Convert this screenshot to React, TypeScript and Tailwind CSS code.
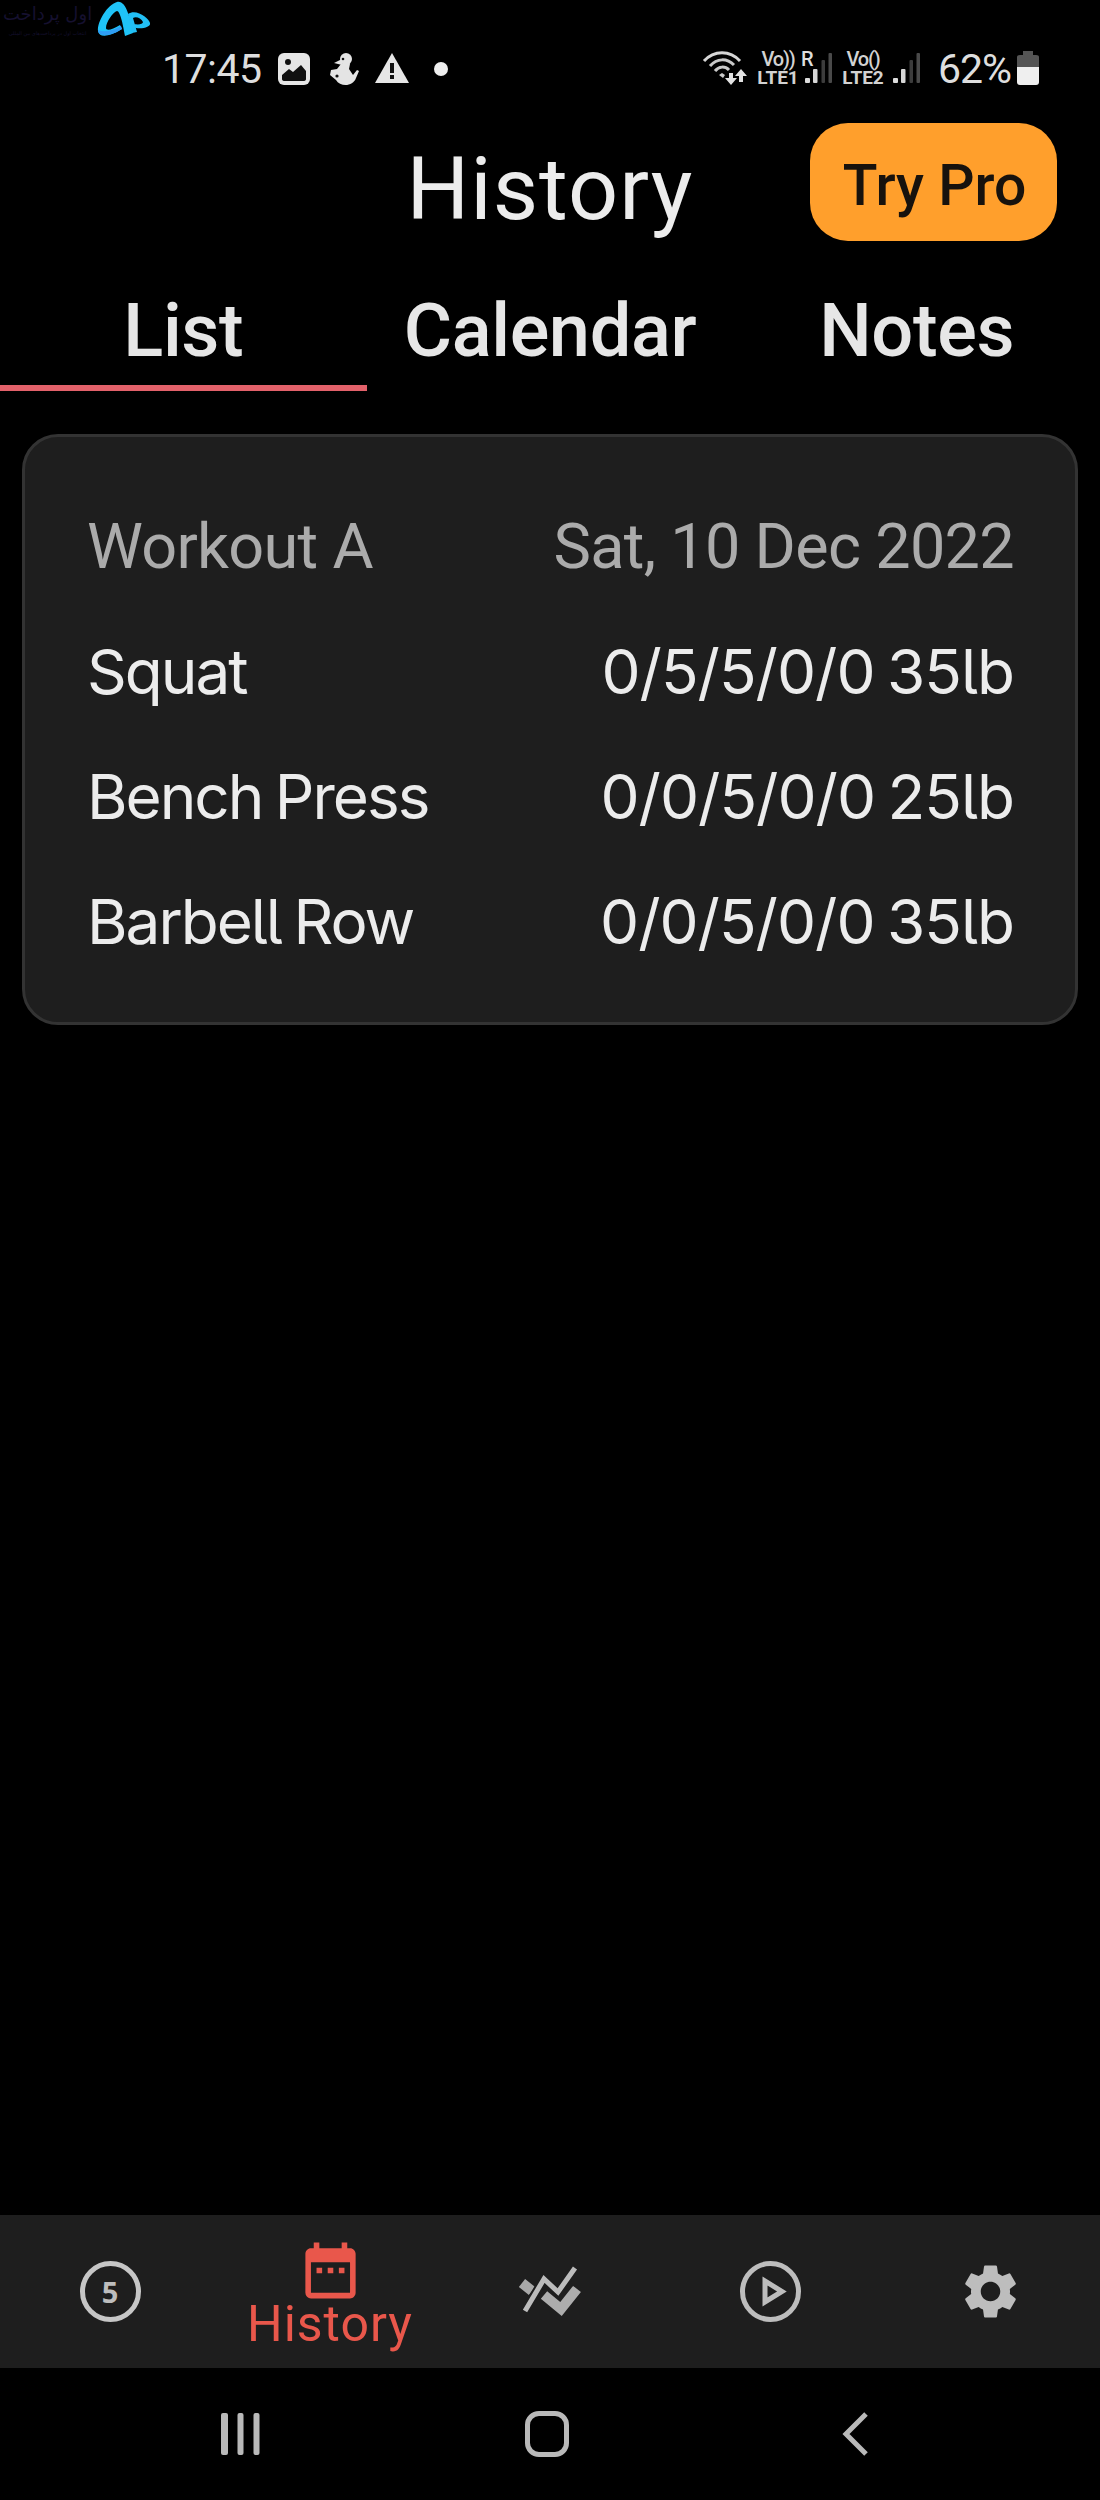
import type { ReactNode } from "react";
import { MdDateRange, MdSettings } from "react-icons/md";

const tabs = [
  { name: "List", active: true },
  { name: "Calendar", active: false },
  { name: "Notes", active: false },
];

const exercises = [
  { name: "Squat", sets: "0/5/5/0/0 35lb" },
  { name: "Bench Press", sets: "0/0/5/0/0 25lb" },
  { name: "Barbell Row", sets: "0/0/5/0/0 35lb" },
];

function BrandLogo() {
  return (
    <div className="absolute top-0 left-0 flex h-10 w-[152px] items-start">
      <div
        dir="rtl"
        className="flex h-10 w-[95px] flex-col items-center font-['DejaVu_Sans',sans-serif] text-[#15102f]"
      >
        <span className="h-[28px] text-[18px] leading-[28px] whitespace-nowrap">
          اول پرداخت
        </span>
        <span className="text-[5px] leading-[10px] whitespace-nowrap">
          انتخاب اول در پرداخت‌های بین المللی
        </span>
      </div>
      <svg viewBox="0 0 54 38" className="ml-[2px] h-[38px] w-[54px]">
        <path
          d="M20 2 C10 5 0 22 1 31 C2 38 12 37 25 29 L23 25 C15 30 9 31 9 28 C9 22 16 12 20 11 C23 11 26 24 28 36 L36 33 C33 18 29 0 20 2Z"
          fill="#1fc3f7"
        />
        <path d="M1 30c0 8 14 6 24-1l-1-3C17 30 8 33 1 30Z" fill="#2f9df4" />
        <path
          d="M31 14 C39 8 52 18 53 23 C54 27 46 29 39 28 L37 24 C42 25 46 24 46 22 C44 18 39 16 36 18 L40 32 L35 33Z"
          fill="#22bff5"
        />
      </svg>
    </div>
  );
}

function WifiIcon() {
  return (
    <svg viewBox="0 0 46 36" className="h-9 w-[46px]" fill="none">
      <path d="M2 11C12 0 28 0 38 11" stroke="#d6d6d6" strokeWidth="3" />
      <path d="M8 16C15 8 25 8 32 15" stroke="#c9c9c9" strokeWidth="3" />
      <path d="M13 21C17 16 23 16 27 20" stroke="#c9c9c9" strokeWidth="3" />
      <path d="M17 25l3-2 3 2-2 3z" fill="#c9c9c9" />
      <path d="M27 23h4v5h4l-6 7-6-7h4zM37 32v-6h-4l6-7 6 7h-4v6z" fill="#e2e2e2" />
    </svg>
  );
}

function SignalBars({ roaming = false }: { roaming?: boolean }) {
  return (
    <div className="flex h-9 flex-col">
      <span className="-mb-[15px] -ml-[2px] h-[17px] text-[20px] leading-[18px] font-medium">
        {roaming ? "R" : ""}
      </span>
      <svg viewBox="0 0 30 32" className="h-8 w-[30px]">
        <rect x="2" y="26" width="5" height="5" rx="1" fill="#ddd" />
        <rect x="10" y="17" width="4.5" height="14" rx="1" fill="#d6d6d6" />
        <rect x="18.5" y="8" width="3.5" height="23" rx="1" fill="#3c3c3c" />
        <rect x="25.5" y="1" width="3.5" height="30" rx="1" fill="#4a4a4a" />
      </svg>
    </div>
  );
}

function VolteBadge({ sim }: { sim: number }) {
  return (
    <div className="flex h-9 w-[44px] flex-col items-center text-[#d2d2d2]">
      <span className="h-[19px] text-[20px] leading-[19px] font-medium tracking-[-1.2px] whitespace-nowrap">
        {sim === 1 ? "Vo))" : "Vo()"}
      </span>
      <span className="h-[17px] text-[19px] leading-[18px] font-bold whitespace-nowrap">
        LTE{sim}
      </span>
    </div>
  );
}

function StatusBar() {
  return (
    <div className="flex h-[112px] items-start pt-[50px] pr-[61px] pl-[162px] text-[#dedede]">
      <span className="w-[116px] text-[41px] leading-[38px] tracking-[-0.5px]">
        17:45
      </span>
      <svg viewBox="0 0 32 36" className="h-9 w-8">
        <rect y="3" width="32" height="32" rx="6" fill="#e6e6e6" />
        <circle cx="10" cy="12" r="3" fill="#111" />
        <path d="M4 29V25L11 19L15 22L23 15L28 21V29Q28 31 25 31H7Q4 31 4 29Z" fill="#111" />
      </svg>
      <svg viewBox="0 0 30 36" className="ml-[19px] h-9 w-[30px]" fill="#e4e4e4">
        <circle cx="17" cy="9" r="6" />
        <path d="M5 13l8-4v6zM12 14h9l-1 5 4 6 4-5 2 1-3 7c-3 9-16 9-20 2l-6-5 1-5 6-1z" />
        <circle cx="14" cy="9" r="1.3" fill="#111" />
        <circle cx="8" cy="26" r="1.6" fill="#111" />
      </svg>
      <svg viewBox="0 0 36 36" className="ml-[15px] h-9 w-9">
        <path d="M18 3L35 33H1Z" fill="#e6e6e6" />
        <path d="M16 13h4v10h-4zM16 25h4v4h-4z" fill="#111" />
      </svg>
      <span className="mt-3 ml-[24px] size-[14px] rounded-full bg-[#eee]" />

      <div className="ml-auto flex items-start">
        <WifiIcon />
        <div className="ml-[8px]">
          <VolteBadge sim={1} />
        </div>
        <div className="ml-[3px]">
          <SignalBars roaming />
        </div>
        <div className="ml-[8px]">
          <VolteBadge sim={2} />
        </div>
        <div className="ml-[6px]">
          <SignalBars />
        </div>
        <span className="ml-[17px] w-[79px] text-[41px] leading-[38px] tracking-[-1px]">
          62%
        </span>
        <svg viewBox="0 0 22 36" className="h-9 w-[22px]">
          <path d="M0 17V7Q0 5 3 5H6V1H16V5H19Q22 5 22 7V17Z" fill="#555" />
          <path d="M0 17H22V32Q22 35 19 35H3Q0 35 0 32Z" fill="#efefef" />
        </svg>
      </div>
    </div>
  );
}

function Header() {
  return (
    <header className="grid h-[148px] grid-cols-[367px_366px_1fr]">
      <span />
      <h1 className="pt-[25px] text-center text-[88px] leading-[104px] tracking-[1px] text-[#ececec]">
        History
      </h1>
      <div className="flex justify-end pt-[11px] pr-[43px]">
        <button className="flex h-[118px] w-[247px] items-center justify-center rounded-[38px] bg-[#ff9f2c] pt-[7px] pl-[2px] text-[57px] font-medium text-[#17120d]">
          Try Pro
        </button>
      </div>
    </header>
  );
}

function Tabs() {
  return (
    <nav className="grid h-[131px] grid-cols-3 text-center text-[74px] leading-[88px] font-medium tracking-[-0.4px] text-[#e6e6e6]">
      {tabs.map((tab) => (
        <div
          key={tab.name}
          className={
            tab.active
              ? "h-[131px] border-b-[6px] border-[#e2616a] pt-[27px]"
              : "h-[131px] pt-[27px]"
          }
        >
          {tab.name}
        </div>
      ))}
    </nav>
  );
}

function WorkoutCard() {
  return (
    <section className="mx-[22px] mt-[43px] flex h-[591px] flex-col rounded-[36px] border-[3px] border-[#333] bg-[#1e1e1e] pt-[47px] pr-[61px] pl-[62px] text-[62px] leading-[125px] text-[#ececec]">
      <div className="flex justify-between text-[63px] tracking-[-0.7px] text-[#ababab]">
        <span>Workout A</span>
        <span>Sat, 10 Dec 2022</span>
      </div>
      {exercises.map((exercise) => (
        <div
          key={exercise.name}
          className="flex justify-between font-[Inter,sans-serif] [font-feature-settings:'cv05']"
        >
          <span className="tracking-[-2px] [word-spacing:-3px]">
            {exercise.name}
          </span>
          <span className="tracking-[-1px] [word-spacing:-4px]">
            {exercise.sets}
          </span>
        </div>
      ))}
    </section>
  );
}

function NavItem({ children }: { children: ReactNode }) {
  return (
    <div className="flex h-full flex-col items-center justify-center">
      {children}
    </div>
  );
}

function BottomNav() {
  return (
    <nav className="grid h-[153px] grid-cols-5 bg-[#1e1e1e] text-[#bdbdbd]">
      <NavItem>
        <div className="flex size-[61px] items-center justify-center rounded-full border-[5px] border-[#c6c6c6] font-['Open_Sans',sans-serif] text-[29px] leading-none font-bold">
          5
        </div>
      </NavItem>
      <div className="flex flex-col items-center pt-[22px] text-[#e9574b]">
        <MdDateRange className="size-[67px] shrink-0" />
        <span className="-mt-[10px] text-[50px] leading-[60px] tracking-[1px]">
          History
        </span>
      </div>
      <NavItem>
        <svg viewBox="0 0 64 56" className="h-14 w-16" fill="none">
          <path d="M4 19L14 27" stroke="#a9a9a9" strokeWidth="10" />
          <path d="M26 31L43 45L59 25" stroke="#adadad" strokeWidth="10" />
          <path d="M7 47L26 15L40 28L57 4" stroke="#1e1e1e" strokeWidth="9" />
          <path d="M7 47L26 15L40 28L57 4" stroke="#bcbcbc" strokeWidth="5" />
        </svg>
      </NavItem>
      <NavItem>
        <svg viewBox="0 0 61 61" className="size-[61px]" fill="none" stroke="#bdbdbd">
          <circle cx="30.5" cy="30.5" r="28" strokeWidth="5" />
          <path d="M25 20V41L42 30.5Z" strokeWidth="5" />
        </svg>
      </NavItem>
      <NavItem>
        <MdSettings className="size-[65px]" />
      </NavItem>
    </nav>
  );
}

function SystemNav() {
  return (
    <div className="flex h-[132px] items-center pb-[1px] pl-[219px]">
      <svg viewBox="0 0 42 50" className="h-[50px] w-[42px]" fill="#b9b9b9">
        <rect x="2" y="4" width="7" height="42" rx="2" />
        <rect x="18.5" y="4" width="6" height="42" rx="2" />
        <rect x="34.5" y="4" width="6" height="42" rx="2" />
      </svg>
      <div className="ml-[264px] h-[46px] w-[44px] rounded-[14px] border-[5px] border-[#b9b9b9]" />
      <svg viewBox="0 0 32 50" className="ml-[270px] h-[50px] w-8" fill="none">
        <path d="M27 5L7 25L27 45" stroke="#b9b9b9" strokeWidth="5" />
      </svg>
    </div>
  );
}

function App() {
  return (
    <div className="relative flex h-[2500px] w-[1100px] flex-col overflow-hidden bg-black font-[Roboto,sans-serif]">
      <BrandLogo />
      <StatusBar />
      <Header />
      <Tabs />
      <main className="flex-1">
        <WorkoutCard />
      </main>
      <BottomNav />
      <SystemNav />
    </div>
  );
}

export default App;
